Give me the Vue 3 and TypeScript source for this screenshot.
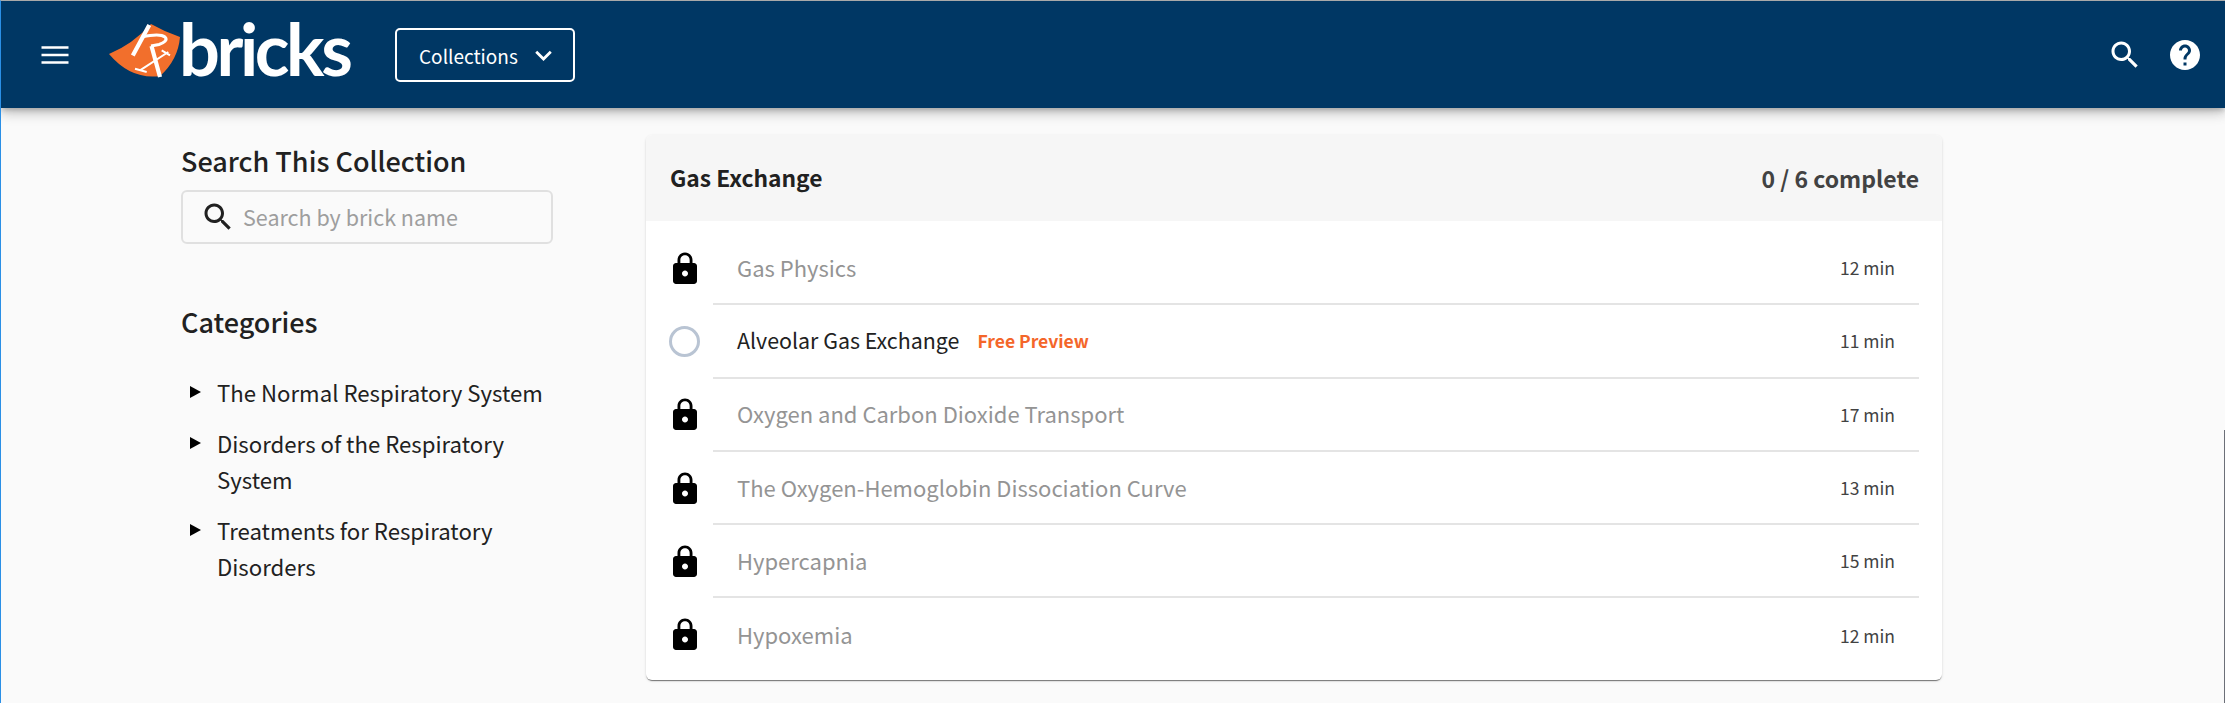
<script setup lang="ts">
const categories = [
  'The Normal Respiratory System',
  'Disorders of the Respiratory System',
  'Treatments for Respiratory Disorders',
]
const bricks = [
  { name: 'Gas Physics', min: 12, locked: true },
  { name: 'Alveolar Gas Exchange', min: 11, locked: false },
  { name: 'Oxygen and Carbon Dioxide Transport', min: 17, locked: true },
  { name: 'The Oxygen-Hemoglobin Dissociation Curve', min: 13, locked: true },
  { name: 'Hypercapnia', min: 15, locked: true },
  { name: 'Hypoxemia', min: 12, locked: true },
]
const lock = 'M18 8h-1V6c0-2.76-2.24-5-5-5S7 3.24 7 6v2H6c-1.1 0-2 .9-2 2v10c0 1.1.9 2 2 2h12c1.1 0 2-.9 2-2V10c0-1.1-.9-2-2-2zm-6 9c-1.1 0-2-.9-2-2s.9-2 2-2 2 .9 2 2-.9 2-2 2zm3.1-9H8.9V6c0-1.71 1.39-3.1 3.1-3.1 1.71 0 3.1 1.39 3.1 3.1v2z'
const search = 'M15.5 14h-.79l-.28-.27C15.41 12.59 16 11.11 16 9.5 16 5.91 13.09 3 9.5 3S3 5.91 3 9.5 5.91 16 9.5 16c1.61 0 3.09-.59 4.23-1.57l.27.28v.79l5 4.99L20.49 19l-4.99-5zm-6 0C7.01 14 5 11.99 5 9.5S7.01 5 9.5 5 14 7.01 14 9.5 11.99 14 9.5 14z'
</script>

<template>
  <div class="page">
    <header class="bar">
      <svg class="icon menu" viewBox="0 0 24 24"><path d="M3 6.1h18v1.8H3zM3 11.1h18v1.8H3zM3 16.1h18v1.8H3z" /></svg>
      <div class="logo">
        <svg class="mark" viewBox="0 0 72 56" aria-hidden="true">
          <path d="M0 32Q24 22 42 2Q56 10 71 15Q69 38 51 54Q22 58 0 32Z" fill="#f26f2c" />
          <g class="mark-lines">
            <path class="thick" d="M40.3 3L23.8 33.5M42.5 24L51 55" />
            <path class="mid" d="M33 15C42 13 52 12 56 15C59 18 55 21 50 22.5L42 24" />
            <path class="thin" d="M59.3 30L31 48.3M52.7 28.3L61 33.3M26 46.7L37.7 50" />
          </g>
        </svg>
        <span class="word">bricks</span>
      </div>
      <button class="collections">
        <span class="coll-text">Collections</span>
        <svg class="chev" viewBox="0 0 24 24"><path d="M16.59 8.59L12 13.17 7.41 8.59 6 10l6 6 6-6z" /></svg>
      </button>
      <div class="spacer"></div>
      <svg class="icon" viewBox="0 0 24 24"><path :d="search" /></svg>
      <svg class="icon help" viewBox="0 0 24 24"><path d="M12 2C6.48 2 2 6.48 2 12s4.48 10 10 10 10-4.48 10-10S17.52 2 12 2zm1 17h-2v-2h2v2zm2.07-7.75l-.9.92C13.45 12.9 13 13.5 13 15h-2v-.5c0-1.1.45-2.1 1.17-2.83l1.24-1.26c.37-.36.59-.86.59-1.41 0-1.1-.9-2-2-2s-2 .9-2 2H8c0-2.21 1.79-4 4-4s4 1.79 4 4c0 .88-.36 1.68-.93 2.25z" /></svg>
    </header>

    <main class="content">
      <aside class="side">
        <h2 class="side-title first">Search This Collection</h2>
        <label class="search">
          <svg class="search-icon" viewBox="0 0 24 24"><path :d="search" /></svg>
          <span class="placeholder">Search by brick name</span>
        </label>
        <h2 class="side-title cats">Categories</h2>
        <ul class="cat-list">
          <li v-for="c in categories" :key="c" class="cat">
            <span class="tri"></span>
            <span class="cat-text">{{ c }}</span>
          </li>
        </ul>
      </aside>

      <section class="card">
        <div class="card-head">
          <span class="card-title">Gas Exchange</span>
          <span class="progress">0 / 6 complete</span>
        </div>
        <div class="rows">
          <div v-for="b in bricks" :key="b.name" class="row">
            <div class="status">
              <svg v-if="b.locked" class="lock" viewBox="0 0 24 24"><path :d="lock" /></svg>
              <span v-else class="circle"></span>
            </div>
            <div class="row-body">
              <span class="name" :class="{ off: b.locked }">{{ b.name }}</span>
              <span v-if="!b.locked" class="free">Free Preview</span>
              <span class="min">{{ b.min }} min</span>
            </div>
          </div>
        </div>
      </section>
    </main>
    <div class="edge"></div>
  </div>
</template>

<style>
html, body { margin: 0; background: #fafafa; }
</style>

<style scoped>
.page {
  width: 2225px;
  height: 703px;
  box-sizing: border-box;
  overflow: hidden;
  position: relative;
  background: #fafafa;
  border-top: 1px solid #a9a9a9;
  border-left: 1px solid #2a8fe6;
  font-family: "Noto Sans CJK SC", "Noto Sans", sans-serif;
  color: #212121;
}
.edge {
  position: absolute;
  right: 0;
  top: 429px;
  bottom: 0;
  width: 1px;
  background: #6c6f78;
}
.bar {
  height: 107px;
  background: #003764;
  display: flex;
  align-items: center;
  box-shadow: 0 3px 5px -1px rgba(0,0,0,.2), 0 6px 10px rgba(0,0,0,.14), 0 1px 18px rgba(0,0,0,.12);
  position: relative;
  padding: 0 22px 0 36px;
}
.icon { width: 36px; height: 36px; fill: #fff; flex: none; }
.menu { margin-top: 1px; }
.logo { display: flex; align-items: flex-end; margin-left: 36px; height: 56px; margin-top: -10px; width: 242px; }
.mark { width: 72px; height: 56px; flex: none; overflow: visible; }
.mark-lines { fill: none; stroke: #fff; }
.thick { stroke-width: 4.2px; }
.mid { stroke-width: 3px; }
.thin { stroke-width: 2px; }
.word {
  font-family: Lato, sans-serif;
  font-weight: 700;
  font-size: 72px;
  line-height: 56px;
  letter-spacing: -3.4px;
  color: #fff;
  margin-left: -2px;
  margin-bottom: 2px;
}
.collections {
  margin-left: 44px;
  width: 180px;
  height: 54px;
  box-sizing: border-box;
  border: 2px solid #fff;
  border-radius: 5px;
  background: transparent;
  color: #fff;
  font: inherit;
  font-size: 19px;
  display: flex;
  align-items: center;
  padding: 0 0 0 22px;
  margin-top: 1px;
}
.chev { width: 33px; height: 33px; fill: #fff; margin-left: 9px; margin-top: 1px; }
.spacer { flex: 1; }
.help { margin-left: 24px; }
.content {
  display: flex;
  align-items: flex-start;
  padding: 27px 0 0 180px;
}
.side { width: 372px; flex: none; }
.side-title { margin: 0; font-size: 27px; font-weight: 500; line-height: 36px; }
.first { margin-top: 8px; }
.search {
  margin-top: 11px;
  height: 54px;
  box-sizing: border-box;
  border: 2px solid #e0e0e0;
  border-radius: 6px;
  display: flex;
  align-items: center;
  padding-left: 20px;
}
.search-icon { width: 36px; height: 36px; fill: #212121; flex: none; margin-left: -3px; }
.placeholder { font-size: 21.5px; color: #9e9e9e; margin-left: 7px; margin-top: -2px; }
.cats { margin-top: 60px; }
.cat-list { list-style: none; margin: 34px 0 0; padding: 0 0 0 9px; }
.cat { display: flex; font-size: 22.2px; line-height: 36px; margin-bottom: 15px; }
.tri {
  width: 0; height: 0; flex: none; margin-top: 12px;
  border-left: 11px solid #000;
  border-top: 6px solid transparent;
  border-bottom: 6px solid transparent;
  margin-right: 16px;
}
.card {
  margin-left: 93px;
  width: 1296px;
  height: 545px;
  border-radius: 6px;
  background: #fff;
  overflow: hidden;
  box-shadow: 0 2px 1px -1px rgba(0,0,0,.4), 0 1px 1px rgba(0,0,0,.14), 0 1px 3px rgba(0,0,0,.12);
}
.card-head {
  height: 86px;
  background: #f6f6f6;
  display: flex;
  align-items: center;
  justify-content: space-between;
  padding: 0 23px 1px 24px;
  box-sizing: border-box;
}
.card-title { font-size: 22.8px; font-weight: 700; }
.progress { font-size: 23px; font-weight: 700; color: #424242; }
.rows { padding-top: 11px; }
.row { display: flex; height: 73.3px; }
.status { width: 67px; flex: none; display: flex; align-items: center; padding-left: 24px; box-sizing: border-box; }
.lock { width: 36px; height: 36px; fill: #000; margin-left: -3px; margin-top: 0; flex: none; }
.circle { width: 31px; height: 31px; box-sizing: border-box; border: 3px solid #b9c4d3; border-radius: 50%; margin-left: -1px; }
.row-body {
  flex: 1;
  margin-right: 23px;
  display: flex;
  align-items: center;
  padding-left: 24px;
  padding-right: 24px;
  border-bottom: 2px solid #e4e4e4;
}
.row:last-child .row-body { border-bottom: 0; }
.name { font-size: 21.4px; color: #212121; margin-top: -2px; }
.name.off { font-size: 22px; color: #949494; }
.free { font-size: 17.5px; font-weight: 700; color: #f4662a; margin-left: 18px; }
.min { margin-left: auto; font-size: 17.5px; color: #424242; }
</style>
